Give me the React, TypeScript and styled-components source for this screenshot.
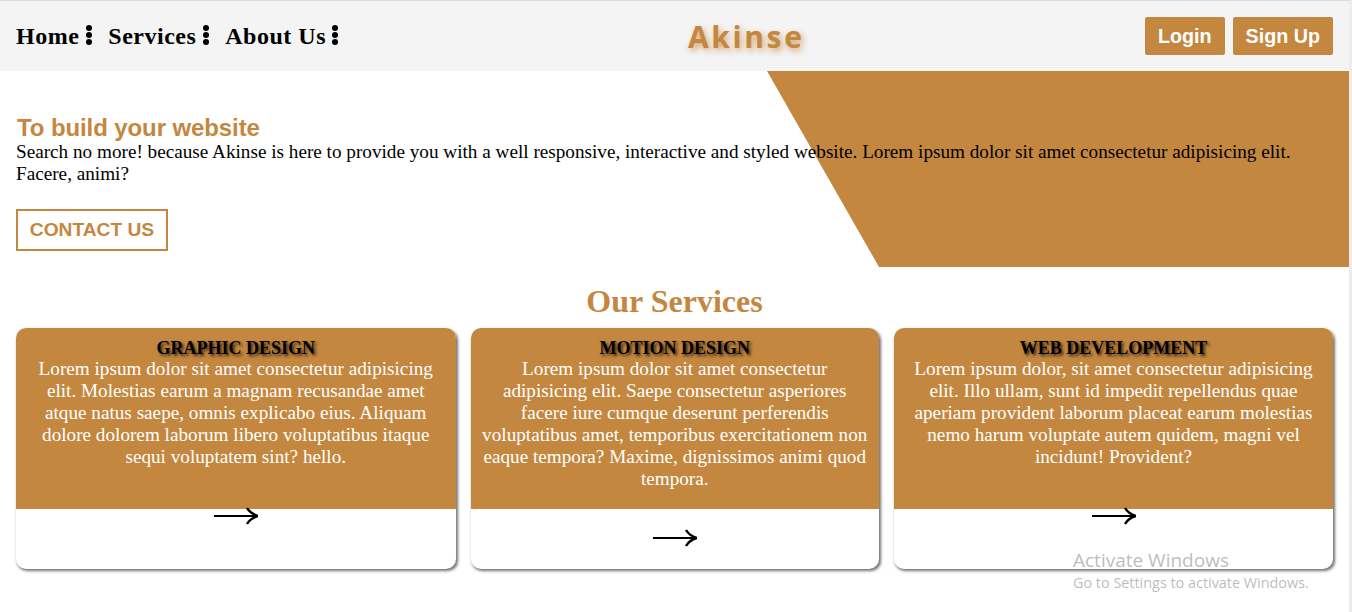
import React from 'react'
import { createGlobalStyle, styled } from 'styled-components'

const GOLD = '#c4873f'

const GlobalStyle = createGlobalStyle`
  html, body {
    margin: 0;
    padding: 0;
    background: #fff;
    overflow: hidden;
  }
  * {
    box-sizing: border-box;
  }
`

const Page = styled.div`
  position: relative;
  width: 1352px;
  height: 612px;
  overflow: hidden;
  border-top: 1px solid #dcdcdc;
  border-right: 3px solid #ececec;
  font-family: 'Liberation Serif', serif;
  color: #000;
`

const Nav = styled.nav`
  height: 70px;
  display: flex;
  justify-content: space-between;
  align-items: center;
  padding: 0 16px;
  background: #f4f4f4;
`

const Links = styled.ul`
  display: flex;
  gap: 16.5px;
  margin: 0;
  padding: 0;
  list-style: none;
`

const LinkItem = styled.li`
  display: flex;
  align-items: center;
  gap: 6.5px;
  font-size: 24px;
  font-weight: 700;
  letter-spacing: 0.5px;
`

const Dots = styled.span`
  display: flex;
  flex-direction: column;
  gap: 1px;
  margin-top: -3px;
`

const Dot = styled.i`
  width: 6px;
  height: 6px;
  border-radius: 50%;
  background: #000;
`

const Logo = styled.div`
  margin-left: 9px;
  font-family: 'Open Sans', sans-serif;
  font-size: 30px;
  font-weight: 700;
  letter-spacing: 2.6px;
  color: ${GOLD};
  text-shadow: 2px 3px 6px rgba(196, 135, 63, 0.75);
`

const Auth = styled.div`
  display: flex;
  gap: 8px;
`

const AuthButton = styled.button`
  height: 38px;
  padding: 0 13px;
  border: 0;
  border-radius: 2px;
  background: ${GOLD};
  color: #fff;
  font-family: 'Liberation Sans', sans-serif;
  font-size: 19.7px;
  font-weight: 700;
`

const Hero = styled.section`
  position: relative;
  height: 196px;
  padding: 43px 16px 0;
`

const HeroShape = styled.div`
  position: absolute;
  top: 0;
  right: 0;
  width: 582px;
  height: 100%;
  background: ${GOLD};
  clip-path: polygon(0 0, 100% 0, 100% 100%, 112px 100%);
`

const HeroTitle = styled.h2`
  position: relative;
  margin: 0;
  padding-left: 1px;
  font-family: 'Liberation Sans', sans-serif;
  font-size: 24px;
  line-height: 27px;
  font-weight: 700;
  letter-spacing: -0.1px;
  color: ${GOLD};
`

const HeroText = styled.p`
  position: relative;
  margin: 0;
  font-size: 19.2px;
  line-height: 22px;
`

const ContactButton = styled.button`
  position: relative;
  display: block;
  width: 152px;
  height: 42px;
  margin-top: 24px;
  padding: 0;
  border: 2px solid ${GOLD};
  background: #fff;
  color: ${GOLD};
  font-family: 'Liberation Sans', sans-serif;
  font-size: 19.2px;
  font-weight: 700;
`

const Services = styled.section`
  padding: 17px 16px 0;
`

const ServicesTitle = styled.h2`
  margin: 0 0 8px;
  height: 36px;
  font-size: 32px;
  line-height: 34px;
  font-weight: 700;
  text-align: center;
  color: ${GOLD};
`

const CardGrid = styled.div`
  display: grid;
  grid-template-columns: 439.5px 407.5px 439px;
  gap: 15.5px;
`

const Card = styled.article`
  height: 241px;
  display: flex;
  flex-direction: column;
  align-items: center;
  overflow: hidden;
  border-radius: 10px;
  background: #fff;
  text-align: center;
  box-shadow: 1.5px 2px 3px rgba(0, 0, 0, 0.55);
`

const CardBody = styled.div`
  width: 100%;
  height: 181px;
  flex-shrink: 0;
  padding: 10px 10px 0;
  background: ${GOLD};
`

const CardTitle = styled.h3`
  margin: 0;
  font-size: 18px;
  line-height: 20px;
  font-weight: 700;
  color: #000;
  text-shadow: 2px 2px 3px rgba(0, 0, 0, 0.75);
`

const CardText = styled.p`
  margin: 0;
  font-size: 19.2px;
  line-height: 22px;
  color: #fff;
`

const Arrow = styled.svg<{ $offset: number }>`
  display: block;
  flex-shrink: 0;
  width: 44px;
  height: 18px;
  margin-top: ${({ $offset }) => $offset - 2}px;
`

const Watermark = styled.div`
  position: absolute;
  left: 1073px;
  top: 548px;
  font-family: 'Open Sans', sans-serif;
  color: rgba(130, 130, 130, 0.55);
`

const WatermarkTitle = styled.div`
  font-size: 19px;
  line-height: 22px;
`

const WatermarkNote = styled.div`
  font-size: 14.4px;
  line-height: 23px;
`

const navLinks = ['Home', 'Services', 'About Us']

const cards = [
  {
    title: 'GRAPHIC DESIGN',
    text: 'Lorem ipsum dolor sit amet consectetur adipisicing elit. Molestias earum a magnam recusandae amet atque natus saepe, omnis explicabo eius. Aliquam dolore dolorem laborum libero voluptatibus itaque sequi voluptatem sint? hello.',
    arrowOffset: 0,
  },
  {
    title: 'MOTION DESIGN',
    text: 'Lorem ipsum dolor sit amet consectetur adipisicing elit. Saepe consectetur asperiores facere iure cumque deserunt perferendis voluptatibus amet, temporibus exercitationem non eaque tempora? Maxime, dignissimos animi quod tempora.',
    arrowOffset: 22,
  },
  {
    title: 'WEB DEVELOPMENT',
    text: 'Lorem ipsum dolor, sit amet consectetur adipisicing elit. Illo ullam, sunt id impedit repellendus quae aperiam provident laborum placeat earum molestias nemo harum voluptate autem quidem, magni vel incidunt! Provident?',
    arrowOffset: 0,
  },
]

const ArrowIcon = ({ offset }: { offset: number }) => (
  <Arrow $offset={offset} viewBox="0 0 44 18" fill="none" stroke="#000">
    <path d="M0 9H43" strokeWidth="2" />
    <path d="M33 1C35 4.5 39 7.5 44 9C39 10.5 35 13.5 33 17" strokeWidth="2.4" />
  </Arrow>
)

export default function App() {
  return (
    <>
      <GlobalStyle />
      <Page>
        <Nav>
          <Links>
            {navLinks.map((link) => (
              <LinkItem key={link}>
                {link}
                <Dots>
                  <Dot />
                  <Dot />
                  <Dot />
                </Dots>
              </LinkItem>
            ))}
          </Links>
          <Logo>Akinse</Logo>
          <Auth>
            <AuthButton>Login</AuthButton>
            <AuthButton>Sign Up</AuthButton>
          </Auth>
        </Nav>
        <Hero>
          <HeroShape />
          <HeroTitle>To build your website</HeroTitle>
          <HeroText>
            Search no more! because Akinse is here to provide you with a well responsive, interactive and styled
            website. Lorem ipsum dolor sit amet consectetur adipisicing elit. Facere, animi?
          </HeroText>
          <ContactButton>CONTACT US</ContactButton>
        </Hero>
        <Services>
          <ServicesTitle>Our Services</ServicesTitle>
          <CardGrid>
            {cards.map((card) => (
              <Card key={card.title}>
                <CardBody>
                  <CardTitle>{card.title}</CardTitle>
                  <CardText>{card.text}</CardText>
                </CardBody>
                <ArrowIcon offset={card.arrowOffset} />
              </Card>
            ))}
          </CardGrid>
        </Services>
        <Watermark>
          <WatermarkTitle>Activate Windows</WatermarkTitle>
          <WatermarkNote>Go to Settings to activate Windows.</WatermarkNote>
        </Watermark>
      </Page>
    </>
  )
}
